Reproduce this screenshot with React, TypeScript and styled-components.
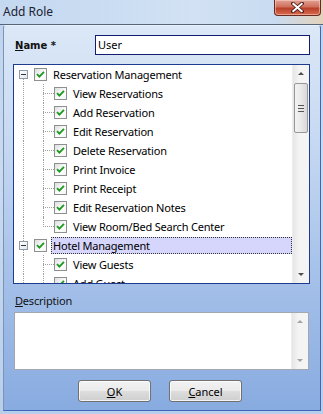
import React from 'react';
import styled, { createGlobalStyle } from 'styled-components';

const GlobalStyle = createGlobalStyle`
  html, body {
    margin: 0;
    padding: 0;
    overflow: hidden;
    background: #c7d9ef;
  }
`;

const Window = styled.div`
  width: 323px;
  height: 414px;
  display: flex;
  flex-direction: column;
  background: linear-gradient(180deg, #bcd3ee 0%, #c9dbf1 40%, #b8cfec 100%);
  font-family: "Noto Sans", "Open Sans", sans-serif;
  font-size: 11px;
  color: #000;
  box-sizing: border-box;
`;

const TitleBar = styled.div`
  height: 24px;
  flex-shrink: 0;
  display: flex;
  align-items: flex-start;
  justify-content: space-between;
  background: linear-gradient(90deg, #c4d8f0 0%, #c9dcf2 30%, #d2e2f4 60%, #c8dbf0 85%, #e3d3bd 100%);
  border-bottom: 1px solid #56657a;
`;

const Title = styled.div`
  padding: 3px 0 0 3px;
  font-size: 12px;
  color: #1b2333;
`;

const CloseButton = styled.div`
  width: 45px;
  height: 15px;
  margin-right: 2px;
  display: flex;
  align-items: center;
  justify-content: center;
  border: 1px solid #6a2a20;
  border-top: none;
  border-radius: 0 0 4px 4px;
  background: linear-gradient(180deg, #e2a194 0%, #d0705d 45%, #b9402a 55%, #d86c4f 100%);
  box-shadow: inset 0 0 0 1px rgba(255, 220, 210, 0.5);
`;

const Client = styled.div`
  flex: 1;
  margin: 0 2px 3px 3px;
  border: 1px solid #7e93b3;
  border-top-color: #e8f0fa;
  border-bottom-color: #3c66b9;
  border-right-color: #3c66b9;
  border-radius: 3px 3px 0 0;
  background: linear-gradient(180deg, #dce8f7 0%, #c6d9f2 30%, #a8c3ea 62%, #88abe0 100%);
  padding: 9px 10px 0 9px;
  display: flex;
  flex-direction: column;
  box-sizing: border-box;
`;

const NameRow = styled.div`
  display: flex;
  align-items: center;
  height: 20px;
`;

const NameLabel = styled.label`
  width: 80px;
  padding-left: 2px;
  font-family: "DejaVu Sans", Verdana, sans-serif;
  font-weight: bold;
  font-size: 10px;
  color: #111;
`;

const Mnemonic = styled.span`
  text-decoration: underline;
`;

const NameInput = styled.div`
  flex: 1;
  height: 20px;
  box-sizing: border-box;
  border: 1px solid #131d6e;
  background: #fff;
  padding: 2px 0 0 2px;
  line-height: 14px;
  color: #000;
`;

const TreeBox = styled.div`
  margin-top: 9px;
  height: 220px;
  box-sizing: border-box;
  border: 1px solid #1f3a8f;
  background: #fff;
  display: flex;
  overflow: hidden;
`;

const TreeRows = styled.div`
  flex: 1;
  overflow: hidden;
`;

const Row = styled.div`
  display: flex;
  align-items: stretch;
  height: 19px;
`;

const Guide = styled.div<{ width: number; line?: 'full' | 'top' | 'bottom' | 'none'; branch?: boolean }>`
  position: relative;
  flex-shrink: 0;
  width: ${p => p.width}px;

  &::before {
    content: '';
    display: ${p => (p.line && p.line !== 'none' ? 'block' : 'none')};
    position: absolute;
    left: ${p => p.width - 11}px;
    top: ${p => (p.line === 'bottom' ? '10px' : '0')};
    bottom: ${p => (p.line === 'top' ? '9px' : '0')};
    border-left: 1px dotted #a0a0a0;
  }

  &::after {
    content: '';
    display: ${p => (p.branch ? 'block' : 'none')};
    position: absolute;
    left: ${p => p.width - 11}px;
    right: 0;
    top: 9px;
    border-top: 1px dotted #a0a0a0;
  }
`;

const ExpandBox = styled.div`
  position: absolute;
  left: 5px;
  top: 5px;
  width: 9px;
  height: 9px;
  box-sizing: border-box;
  border: 1px solid #8f9aa8;
  background: linear-gradient(135deg, #ffffff 0%, #e4e6ea 100%);
  display: flex;
  align-items: center;
  justify-content: center;
  z-index: 1;

  &::before {
    content: '';
    width: 5px;
    height: 1px;
    background: #2a3542;
  }
`;

const CheckBox = styled.div`
  flex-shrink: 0;
  align-self: center;
  width: 13px;
  height: 13px;
  box-sizing: border-box;
  border: 1px solid #8e8f8f;
  background: linear-gradient(135deg, #dcdedf 0%, #ffffff 60%, #f3f3f3 100%);
  display: flex;
  align-items: center;
  justify-content: center;
`;

const NodeLabel = styled.div<{ selected?: boolean }>`
  flex: 1;
  margin: 1px 0 1px 4px;
  padding-left: 1px;
  line-height: 15px;
  letter-spacing: -0.2px;
  white-space: nowrap;
  box-sizing: border-box;
  border: 1px dotted ${p => (p.selected ? '#333' : 'transparent')};
  background: ${p => (p.selected ? '#d6d5fb' : 'transparent')};
  color: #000;
`;

const ScrollBar = styled.div`
  width: 17px;
  flex-shrink: 0;
  display: flex;
  flex-direction: column;
  align-items: center;
  background: linear-gradient(90deg, #e6e6e6 0%, #f4f4f4 40%, #f4f4f4 100%);
  border-left: 1px solid #ededed;
  box-sizing: border-box;
`;

const Arrow = styled.div<{ down?: boolean; disabled?: boolean }>`
  height: 17px;
  width: 100%;
  display: flex;
  align-items: center;
  justify-content: center;

  &::before {
    content: '';
    width: 0;
    height: 0;
    border-left: 3px solid transparent;
    border-right: 3px solid transparent;
    ${p => (p.down ? 'border-top' : 'border-bottom')}: 3px solid ${p => (p.disabled ? '#a3a3a3' : '#4d4d4d')};
  }
`;

const Thumb = styled.div`
  margin-top: 1px;
  width: 14px;
  height: 50px;
  box-sizing: border-box;
  border: 1px solid #979797;
  border-radius: 2px;
  background: linear-gradient(90deg, #f2f2f2 0%, #e9e9e9 50%, #d8d8d8 100%);
  display: flex;
  align-items: center;
  justify-content: center;
`;

const Grip = styled.div`
  width: 6px;
  height: 7px;
  background: repeating-linear-gradient(180deg, #555 0px, #555 1px, transparent 1px, transparent 3px);
`;

const Track = styled.div`
  flex: 1;
`;

const DescLabel = styled.div`
  margin-top: 9px;
  padding-left: 2px;
  line-height: 16px;
  letter-spacing: -0.2px;
  color: #111;
`;

const DescBox = styled.div`
  margin: 3px 1px 0 1px;
  height: 58px;
  box-sizing: border-box;
  border: 1px solid #a3a7b0;
  background: #fff;
  display: flex;
  justify-content: flex-end;
`;

const ButtonRow = styled.div`
  display: flex;
  justify-content: center;
  gap: 18px;
  margin-top: 10px;
  padding-right: 3px;
`;

const Button = styled.div`
  width: 73px;
  height: 22px;
  box-sizing: border-box;
  border: 1px solid #707070;
  border-radius: 3px;
  background: linear-gradient(180deg, #f2f2f2 0%, #ebebeb 48%, #dddddd 52%, #cfcfcf 100%);
  box-shadow: inset 0 0 0 1px rgba(255, 255, 255, 0.75);
  display: flex;
  align-items: center;
  justify-content: center;
  color: #000;
`;

type Node = { label: string; children: string[]; selected?: boolean };

const tree: Node[] = [
  {
    label: 'Reservation Management',
    children: [
      'View Reservations',
      'Add Reservation',
      'Edit Reservation',
      'Delete Reservation',
      'Print Invoice',
      'Print Receipt',
      'Edit Reservation Notes',
      'View Room/Bed Search Center',
    ],
  },
  {
    label: 'Hotel Management',
    selected: true,
    children: ['View Guests', 'Add Guest'],
  },
];

function Check() {
  return (
    <svg width="9" height="9" viewBox="0 0 9 9">
      <path d="M1 4.2 L3.4 6.6 L8 1.8" fill="none" stroke="#1f9a22" strokeWidth="1.9" />
    </svg>
  );
}

function CloseGlyph() {
  return (
    <svg width="13" height="11" viewBox="0 0 13 11">
      <path d="M2 1.5 L11 9.5 M11 1.5 L2 9.5" stroke="#4a1a14" strokeWidth="3.6" strokeLinecap="square" />
      <path d="M2.3 1.8 L10.7 9.2 M10.7 1.8 L2.3 9.2" stroke="#ffffff" strokeWidth="2" strokeLinecap="square" />
    </svg>
  );
}

export default function App() {
  return (
    <>
      <GlobalStyle />
      <Window>
        <TitleBar>
          <Title>Add Role</Title>
          <CloseButton>
            <CloseGlyph />
          </CloseButton>
        </TitleBar>
        <Client>
          <NameRow>
            <NameLabel>
              <Mnemonic>N</Mnemonic>ame *
            </NameLabel>
            <NameInput>User</NameInput>
          </NameRow>

          <TreeBox>
            <TreeRows>
              {tree.map((node, ni) => (
                <React.Fragment key={node.label}>
                  <Row>
                    <Guide width={20} line={ni === 0 ? 'bottom' : 'full'}>
                      <ExpandBox />
                    </Guide>
                    <CheckBox>
                      <Check />
                    </CheckBox>
                    <NodeLabel selected={node.selected}>{node.label}</NodeLabel>
                  </Row>
                  {node.children.map((child, ci) => (
                    <Row key={child}>
                      <Guide width={20} line="full" />
                      <Guide
                        width={20}
                        line={ci === node.children.length - 1 && ni === 0 ? 'top' : 'full'}
                        branch
                      />
                      <CheckBox>
                        <Check />
                      </CheckBox>
                      <NodeLabel>{child}</NodeLabel>
                    </Row>
                  ))}
                </React.Fragment>
              ))}
            </TreeRows>
            <ScrollBar>
              <Arrow />
              <Thumb>
                <Grip />
              </Thumb>
              <Track />
              <Arrow down />
            </ScrollBar>
          </TreeBox>

          <DescLabel>
            <Mnemonic>D</Mnemonic>escription
          </DescLabel>
          <DescBox>
            <ScrollBar>
              <Arrow disabled />
              <Track />
              <Arrow down disabled />
            </ScrollBar>
          </DescBox>

          <ButtonRow>
            <Button>
              <Mnemonic>O</Mnemonic>K
            </Button>
            <Button>
              <Mnemonic>C</Mnemonic>ancel
            </Button>
          </ButtonRow>
        </Client>
      </Window>
    </>
  );
}
